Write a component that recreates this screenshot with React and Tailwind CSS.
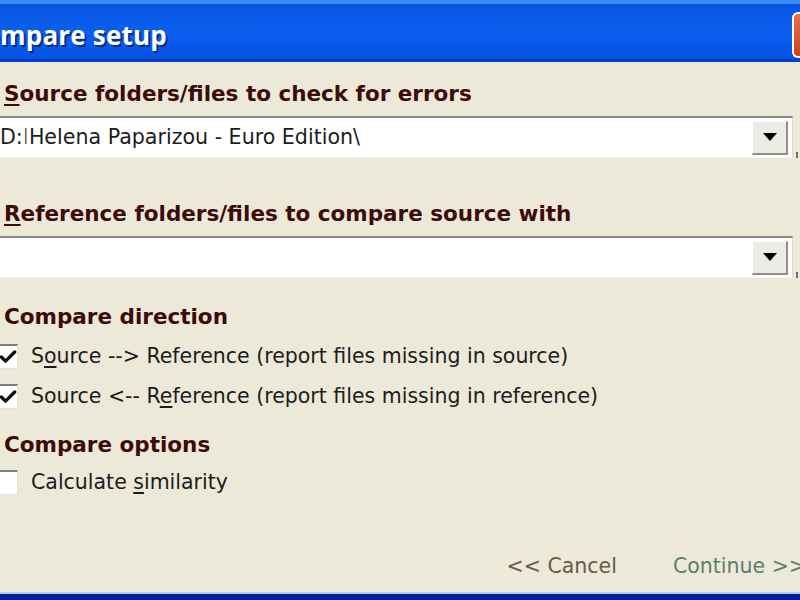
import { Check } from "lucide-react";

function Combo({ value }) {
  return (
    <div className="flex items-center h-[42px]">
      <div className="flex items-center flex-1 h-full bg-white border-t-2 border-b border-r border-t-[#8a8a86] border-b-[#f4f3ee] border-r-[#d8d6cb] pr-[4px]">
        <div className="flex-1 pl-0 text-[20.6px] leading-none text-[#1c1c1c] whitespace-nowrap">{value}</div>
        <div className="w-[36px] h-[34px] flex items-center justify-center bg-[#ecebe4] border-r-2 border-b-2 border-[#8f8f88] border-l border-t border-l-[#ffffff] border-t-[#ffffff]">
          <svg width="16" height="10" viewBox="0 0 16 10">
            <path d="M1 1 H15 L8 9 Z" fill="#000" />
          </svg>
        </div>
      </div>
      <div className="w-[7px] h-full flex items-end">
        <div className="ml-[3px] w-[2px] h-[6px] bg-[#6f6f6f]" />
      </div>
    </div>
  );
}

function CheckRow({ checked, children }) {
  return (
    <div className="flex items-center h-[30px]">
      <div className="w-[20px] h-[25px] -ml-[2px] bg-white border-t-2 border-[#7f7f7f] border-r border-r-[#e4e2d8] border-b border-b-[#e4e2d8] flex items-center justify-end">
        {checked && <Check size={20} strokeWidth={4} className="text-[#111] -mr-[1px]" />}
      </div>
      <div className="ml-[13px] text-[20.5px] leading-none text-[#1c1c1c] whitespace-nowrap">{children}</div>
    </div>
  );
}

function Heading({ children }) {
  return (
    <div className="h-[30px] flex items-center pl-[4px] text-[21.5px] font-bold leading-none text-[#3d0b0b] whitespace-nowrap">
      {children}
    </div>
  );
}

export default function App() {
  return (
    <div className="w-[800px] h-[600px] overflow-hidden bg-[#ece9d8] flex flex-col font-['Tahoma','DejaVu_Sans',sans-serif]">
      {/* title bar */}
      <div className="h-[62px] flex flex-col shrink-0">
        <div className="h-[4px] bg-[#3a8af5]" />
        <div className="flex-1 flex items-center bg-gradient-to-b from-[#0755e0] via-[#0a5fef] to-[#0653e4]">
          <div className="flex-1 -ml-[33px] pt-[8px] text-[26px] font-bold text-white font-['Open_Sans','DejaVu_Sans',sans-serif] [text-shadow:2px_2px_0_#0a2c8a] tracking-[0.2px]">
            Compare setup
          </div>
          <div className="w-[8px] h-[46px] mt-[6px] rounded-l-[6px] border-2 border-r-0 border-white bg-gradient-to-b from-[#e57152] to-[#c9401e]" />
        </div>
        <div className="h-[3px] bg-[#0a3ec4]" />
      </div>

      {/* body */}
      <div className="flex-1 flex flex-col pt-[17px]">
        <Heading>
          <span className="underline underline-offset-[3px]">S</span>ource folders/files to check for errors
        </Heading>
        <div className="mt-[7px]">
          <Combo
            value={
              <span>
                D:<span className="font-light">I</span>Helena Paparizou - Euro Edition\
              </span>
            }
          />
        </div>

        <div className="mt-[41px]">
          <Heading>
            <span className="underline underline-offset-[3px]">R</span>eference folders/files to compare source with
          </Heading>
        </div>
        <div className="mt-[7px]">
          <Combo value="" />
        </div>

        <div className="mt-[24px]">
          <Heading>Compare direction</Heading>
        </div>
        <div className="mt-[9px]">
          <CheckRow checked>
            S<span className="underline underline-offset-[3px]">o</span>urce --&gt; Reference (report files missing in source)
          </CheckRow>
        </div>
        <div className="mt-[10px]">
          <CheckRow checked>
            Source &lt;-- R<span className="underline underline-offset-[3px]">e</span>ference (report files missing in reference)
          </CheckRow>
        </div>

        <div className="mt-[19px]">
          <Heading>Compare options</Heading>
        </div>
        <div className="mt-[7px]">
          <CheckRow checked={false}>
            Calculate <span className="underline underline-offset-[3px]">s</span>imilarity
          </CheckRow>
        </div>

        <div className="flex-1" />
        <div className="h-[30px] flex items-center justify-end gap-[56px] mb-[11px] text-[20.5px] leading-none whitespace-nowrap -mr-[6px]">
          <span className="text-[#6b574c]">&lt;&lt; Cancel</span>
          <span className="text-[#5d7d6d]">Continue &gt;&gt;</span>
        </div>
      </div>

      {/* bottom frame */}
      <div className="h-[8px] flex flex-col shrink-0">
        <div className="h-[2px] bg-[#a9d0f2]" />
        <div className="flex-1 bg-[#0b1f9c]" />
      </div>
    </div>
  );
}
